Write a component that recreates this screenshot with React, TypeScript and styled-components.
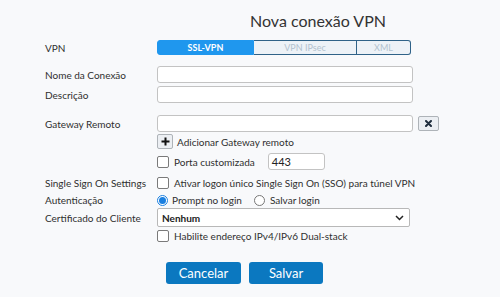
import React from "react";
import styled, { createGlobalStyle } from "styled-components";

const Global = createGlobalStyle`
  html, body { margin: 0; padding: 0; background: #f8f9fb; }
  body { font-family: Lato, "Open Sans", sans-serif; color: #333; }
  * { box-sizing: border-box; }
`;

const Page = styled.div`
  width: 500px;
  height: 297px;
  padding-left: 45px;
  display: flex;
  flex-direction: column;
`;

const Title = styled.h1`
  margin: 0;
  height: 40px;
  line-height: 42px;
  padding-left: 205px;
  font-size: 16px;
  font-weight: 400;
  color: #333;
`;

const Row = styled.div<{ $mt: number; $h: number }>`
  display: grid;
  grid-template-columns: 112px 1fr;
  align-items: center;
  margin-top: ${(p) => p.$mt}px;
  height: ${(p) => p.$h}px;
`;

const Label = styled.div`
  font-size: 10px;
  color: #2f2f2f;
  white-space: nowrap;
`;

const Field = styled.div`
  display: flex;
  align-items: center;
  height: 100%;
`;

const Segmented = styled.div`
  display: flex;
  height: 15px;
  width: 254px;
`;

const Seg = styled.div<{ $w: number; $active?: boolean; $first?: boolean; $last?: boolean }>`
  width: ${(p) => p.$w}px;
  height: 100%;
  display: flex;
  align-items: center;
  justify-content: center;
  font-size: 9px;
  font-weight: ${(p) => (p.$active ? 700 : 400)};
  background: ${(p) => (p.$active ? "#1f97ee" : "#edf2f7")};
  color: ${(p) => (p.$active ? "#fff" : "#b3c2cf")};
  border: 1px solid ${(p) => (p.$active ? "#1f97ee" : "#2f6288")};
  border-left-width: ${(p) => (p.$first || p.$active ? 1 : 0)}px;
  border-radius: ${(p) => (p.$first ? "3px 0 0 3px" : p.$last ? "0 3px 3px 0" : "0")};
`;

const TextInput = styled.div<{ $w: number; $ml?: number }>`
  width: ${(p) => p.$w}px;
  height: 17px;
  margin-left: ${(p) => p.$ml ?? 0}px;
  background: #fff;
  border: 1px solid #c3c3c3;
  border-radius: 3px;
  font-size: 11px;
  display: flex;
  align-items: center;
  padding-left: 3px;
  color: #222;
`;

const IconButton = styled.div<{ $w: number; $h: number; $ml: number }>`
  width: ${(p) => p.$w}px;
  height: ${(p) => p.$h}px;
  margin-left: ${(p) => p.$ml}px;
  background: #eceff3;
  border: 1px solid #aeb3b8;
  border-radius: 2px;
  display: flex;
  align-items: center;
  justify-content: center;
`;

const Option = styled.span<{ $ml?: number }>`
  font-size: 10px;
  color: #2f2f2f;
  margin-left: ${(p) => p.$ml ?? 5}px;
  white-space: nowrap;
`;

const Check = styled.span`
  width: 12px;
  height: 12px;
  flex: none;
  background: #fff;
  border: 1px solid #7a7a7a;
  border-radius: 2px;
`;

const Radio = styled.span<{ $on?: boolean; $ml?: number }>`
  width: 11px;
  height: 11px;
  flex: none;
  margin-left: ${(p) => p.$ml ?? 0}px;
  border-radius: 50%;
  background: #fff;
  border: 1px solid ${(p) => (p.$on ? "#1a7fe0" : "#777")};
  display: flex;
  align-items: center;
  justify-content: center;
  &::after {
    content: "";
    width: 7px;
    height: 7px;
    border-radius: 50%;
    background: ${(p) => (p.$on ? "#1a7fe0" : "transparent")};
  }
`;

const Select = styled.div`
  width: 253px;
  height: 19px;
  background: #fff;
  border: 1px solid #b8b8b8;
  border-radius: 2px;
  display: flex;
  align-items: center;
  justify-content: space-between;
  padding: 0 5px 0 4px;
  font-size: 10px;
  font-weight: 700;
  color: #222;
`;

const Actions = styled.div`
  display: flex;
  gap: 8px;
  margin-top: 20px;
  padding-left: 121px;
`;

const PrimaryButton = styled.div<{ $w: number }>`
  width: ${(p) => p.$w}px;
  height: 22px;
  background: #0b78c0;
  border-radius: 3px;
  color: #fff;
  font-size: 13px;
  display: flex;
  align-items: center;
  justify-content: center;
`;

export default function App() {
  return (
    <>
      <Global />
      <Page>
        <Title>Nova conexão VPN</Title>
        <Row $mt={0} $h={15}>
          <Label>VPN</Label>
          <Field>
            <Segmented>
              <Seg $w={97} $active $first>SSL-VPN</Seg>
              <Seg $w={103}>VPN IPsec</Seg>
              <Seg $w={54} $last>XML</Seg>
            </Segmented>
          </Field>
        </Row>
        <Row $mt={11} $h={17}>
          <Label>Nome da Conexão</Label>
          <Field><TextInput $w={256} /></Field>
        </Row>
        <Row $mt={3} $h={17}>
          <Label>Descrição</Label>
          <Field><TextInput $w={256} /></Field>
        </Row>
        <Row $mt={12} $h={17}>
          <Label>Gateway Remoto</Label>
          <Field>
            <TextInput $w={256} />
            <IconButton $w={21} $h={15} $ml={5}>
              <svg width="7" height="7" viewBox="0 0 7 7">
                <path d="M1 1 L6 6 M6 1 L1 6" stroke="#1f2d3d" strokeWidth="2" strokeLinecap="round" />
              </svg>
            </IconButton>
          </Field>
        </Row>
        <Row $mt={2} $h={15}>
          <Label />
          <Field>
            <IconButton $w={16} $h={15} $ml={0}>
              <svg width="9" height="9" viewBox="0 0 9 9">
                <path d="M4.5 0.5 V8.5 M0.5 4.5 H8.5" stroke="#111" strokeWidth="2" />
              </svg>
            </IconButton>
            <Option $ml={4}>Adicionar Gateway remoto</Option>
          </Field>
        </Row>
        <Row $mt={4} $h={17}>
          <Label />
          <Field>
            <Check />
            <Option>Porta customizada</Option>
            <TextInput $w={57} $ml={13}>443</TextInput>
          </Field>
        </Row>
        <Row $mt={7} $h={12}>
          <Label>Single Sign On Settings</Label>
          <Field>
            <Check />
            <Option>Ativar logon único Single Sign On (SSO) para túnel VPN</Option>
          </Field>
        </Row>
        <Row $mt={5} $h={11}>
          <Label>Autenticação</Label>
          <Field>
            <Radio $on />
            <Option $ml={4}>Prompt no login</Option>
            <Radio $ml={12} />
            <Option $ml={5}>Salvar login</Option>
          </Field>
        </Row>
        <Row $mt={3} $h={19}>
          <Label>Certificado do Cliente</Label>
          <Field>
            <Select>
              <span>Nenhum</span>
              <svg width="9" height="6" viewBox="0 0 9 6">
                <path d="M1 1 L4.5 4.5 L8 1" stroke="#222" strokeWidth="1.5" fill="none" />
              </svg>
            </Select>
          </Field>
        </Row>
        <Row $mt={3} $h={12}>
          <Label />
          <Field>
            <Check />
            <Option>Habilite endereço IPv4/IPv6 Dual-stack</Option>
          </Field>
        </Row>
        <Actions>
          <PrimaryButton $w={75}>Cancelar</PrimaryButton>
          <PrimaryButton $w={74}>Salvar</PrimaryButton>
        </Actions>
      </Page>
    </>
  );
}
